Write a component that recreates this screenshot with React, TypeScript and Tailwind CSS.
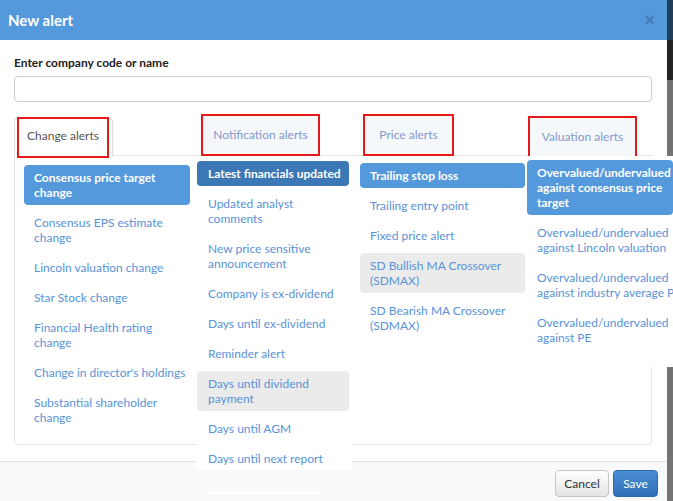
type Item = { text: string; kind?: "active" | "dark" | "grey" };

const changeAlerts: Item[] = [
  { text: "Consensus price target\nchange", kind: "active" },
  { text: "Consensus EPS estimate\nchange" },
  { text: "Lincoln valuation change" },
  { text: "Star Stock change" },
  { text: "Financial Health rating\nchange" },
  { text: "Change in director's holdings" },
  { text: "Substantial shareholder\nchange" },
];

const notificationAlerts: Item[] = [
  { text: "Latest financials updated", kind: "dark" },
  { text: "Updated analyst\ncomments" },
  { text: "New price sensitive\nannouncement" },
  { text: "Company is ex-dividend" },
  { text: "Days until ex-dividend" },
  { text: "Reminder alert" },
  { text: "Days until dividend\npayment", kind: "grey" },
  { text: "Days until AGM" },
  { text: "Days until next report" },
];

const priceAlerts: Item[] = [
  { text: "Trailing stop loss", kind: "active" },
  { text: "Trailing entry point" },
  { text: "Fixed price alert" },
  { text: "SD Bullish MA Crossover\n(SDMAX)", kind: "grey" },
  { text: "SD Bearish MA Crossover\n(SDMAX)" },
];

const valuationAlerts: Item[] = [
  { text: "Overvalued/undervalued\nagainst consensus price\ntarget", kind: "active" },
  { text: "Overvalued/undervalued\nagainst Lincoln valuation" },
  { text: "Overvalued/undervalued\nagainst industry average PE" },
  { text: "Overvalued/undervalued\nagainst PE" },
];

const kindClass = (kind?: Item["kind"]) => {
  if (kind === "active") return "bg-[#5599dd] text-white font-bold";
  if (kind === "dark") return "bg-[#3b78b5] text-white font-bold";
  if (kind === "grey") return "bg-[#ebebeb] text-[#5a92d8]";
  return "text-[#5a92d8]";
};

const AlertList = ({ items, pad }: { items: Item[]; pad: string }) => (
  <div className="flex flex-col">
    {items.map((it) => (
      <div
        key={it.text}
        className={`my-[2.5px] py-[5px] ${pad} leading-[15px] rounded-[4px] whitespace-pre ${kindClass(it.kind)}`}
      >
        {it.text}
      </div>
    ))}
  </div>
);

export default function App() {
  return (
    <div className="flex w-[673px] h-[501px] overflow-hidden bg-[#737373] font-['Lato',sans-serif] text-[12px]">
      <div className="flex flex-col w-[667px] h-[501px] shrink-0">
        {/* header */}
        <div className="h-[40px] bg-[#5599dd] flex items-center justify-between pl-[8px] pr-[12px]">
          <span className="text-white font-bold text-[15px]">New alert</span>
          <span className="text-[#3f74aa] font-bold text-[18px] font-['Liberation_Sans',sans-serif] opacity-80">×</span>
        </div>

        {/* body */}
        <div className="flex-1 bg-white px-[14px] pt-[16px]">
          <div className="h-[14px] leading-[14px] font-bold text-[#222]">Enter company code or name</div>
          <div className="mt-[6px] h-[26px] w-[638px] border border-[#cccccc] rounded-[4px] bg-white" />

          {/* tabs */}
          <div className="relative z-10 mt-[12px] flex items-start">
            <div className="relative ml-[3px] mt-[3px] w-[92px] h-[41px]">
              <div className="absolute left-[-3px] top-[1px] w-[99px] h-[38px] bg-white border border-b-0 border-[#dddddd] rounded-t-[4px]" />
              <div className="relative w-full h-full border-2 border-[#e8191b] flex items-center justify-center pb-[4px] text-[#555]">
                Change alerts
              </div>
            </div>
            <div className="ml-[92px] w-[119px] h-[42px] border-2 border-[#e8191b] bg-[#f5f8fb] flex items-center justify-center text-[#8497cf]">
              Notification alerts
            </div>
            <div className="ml-[43px] w-[91px] h-[42px] border-2 border-[#e8191b] bg-[#f5f8fb] flex items-center justify-center text-[#8497cf]">
              Price alerts
            </div>
            <div className="ml-[74px] mt-[2px] w-[109px] h-[42px] border-2 border-[#e8191b] bg-[#f5f8fb] flex items-center justify-center text-[#8497cf]">
              Valuation alerts
            </div>
          </div>

          {/* tab panel */}
          <div className="-mt-[3px] h-[290px] w-[638px] border border-[#e5e5e5] rounded-b-[4px] flex items-start">
            <div className="ml-[9px] w-[166px] shrink-0 pt-[6.5px]">
              <AlertList items={changeAlerts} pad="px-[10px]" />
            </div>
            <div className="relative z-20 ml-[6px] w-[156px] shrink-0 flex flex-col">
              <div className="h-[314px] overflow-hidden bg-white pl-[1px] pr-[3px] pt-[2.5px]">
                <AlertList items={notificationAlerts} pad="px-[11px]" />
              </div>
              <div className="mt-[22px] ml-[9px] w-[120px] h-[2px] bg-white" />
            </div>
            <div className="ml-[8px] w-[165px] shrink-0 pt-[4.5px]">
              <AlertList items={priceAlerts} pad="px-[10px]" />
            </div>
            <div className="relative z-20 ml-[2px] w-[146px] h-[211px] shrink-0 bg-white pt-[1.5px]">
              <AlertList items={valuationAlerts} pad="px-[10px]" />
            </div>
          </div>
        </div>

        {/* footer */}
        <div className="h-[40px] border-t border-[#e2e2e2] bg-[#f8f9fb] flex justify-end items-start gap-[4px] pt-[8px] pr-[9px]">
          <button className="w-[54px] h-[27px] rounded-[4px] border border-[#c5c5c5] bg-linear-to-b from-white to-[#e4e4e4] text-[#333] text-[12px]">
            Cancel
          </button>
          <button className="w-[45px] h-[27px] rounded-[4px] border border-[#2c67a8] bg-linear-to-b from-[#4a8fd6] to-[#2f6fb8] text-white text-[12px]">
            Save
          </button>
        </div>
      </div>

      {/* page behind the dialog */}
      <div className="w-[6px] shrink-0 flex flex-col">
        <div className="h-[40px] bg-[#1f3c58]" />
        <div className="h-[40px] bg-[#242424]" />
        <div className="flex-1 bg-[#737373]" />
      </div>
    </div>
  );
}
